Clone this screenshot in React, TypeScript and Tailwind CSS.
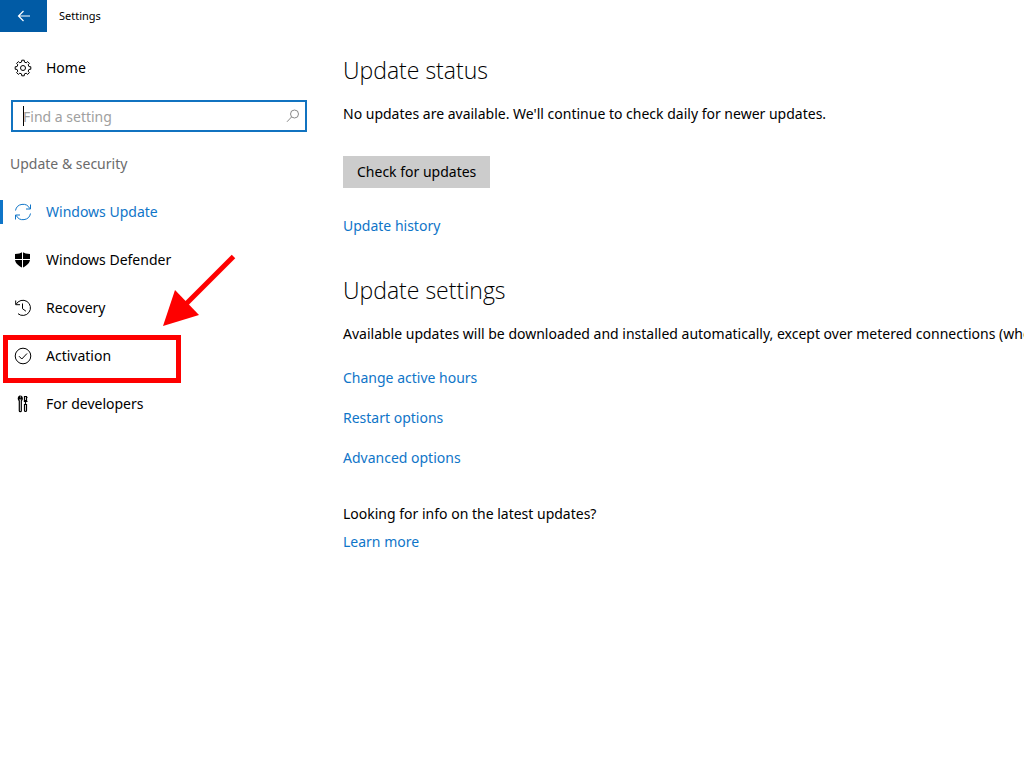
import type { ReactNode } from "react";

type IconProps = { children: ReactNode };

function Icon({ children }: IconProps) {
    return (
        <svg
            viewBox="0 0 18 18"
            className="size-[18px] shrink-0"
            fill="none"
            stroke="currentColor"
            strokeWidth="1"
            aria-hidden="true"
        >
            {children}
        </svg>
    );
}

function gearPath(teeth: number) {
    const points: string[] = [];
    const step = (Math.PI * 2) / teeth;

    for (let i = 0; i < teeth; i++) {
        const corners = [
            [-0.3, 6.1],
            [-0.2, 7.9],
            [0.2, 7.9],
            [0.3, 6.1],
        ];

        for (const [offset, radius] of corners) {
            const angle = (i + offset) * step;
            points.push(`${9 + radius * Math.sin(angle)} ${9 - radius * Math.cos(angle)}`);
        }
    }

    return `M${points.join("L")}Z`;
}

function GearIcon() {
    return (
        <Icon>
            <path strokeLinejoin="round" d={gearPath(8)} />
            <circle cx="9" cy="9" r="2.5" />
        </Icon>
    );
}

function SyncIcon() {
    return (
        <Icon>
            <path d="M1.5 7.5A7.6 7.6 0 0 1 15.8 5.6M16.5 1.5v4.5h-4.5" />
            <path d="M16.5 10.5A7.6 7.6 0 0 1 2.2 12.4M1.5 16.5V12h4.5" />
        </Icon>
    );
}

function ShieldIcon() {
    return (
        <Icon>
            <path
                fill="currentColor"
                stroke="none"
                d="M8.5 1C6.7 2.3 4.2 3 1 3v5c0 4 3 6.7 7.5 8.7C13 14.7 16 12 16 8V3C12.8 3 10.3 2.3 8.5 1z"
            />
            <path stroke="white" d="M8.5 1v16M1 8.5h16" />
        </Icon>
    );
}

function HistoryIcon() {
    return (
        <Icon>
            <path d="M2.2 5.2A7.6 7.6 0 1 1 4 14.7M1.7 1.5v4.2H6" />
            <path d="M8.5 4.5v5.2l3.4 2.5" />
        </Icon>
    );
}

function CheckIcon() {
    return (
        <Icon>
            <circle cx="9" cy="9" r="7.8" />
            <path d="m5 9.2 2.8 2.8L13 6.5" />
        </Icon>
    );
}

function ToolsIcon() {
    return (
        <Icon>
            <path
                strokeWidth="1.2"
                d="M5.5 1.3C4.6 1.8 4.3 2.6 4.3 3.5c0 1 .4 1.700 1 2.200v10c0 1.300 2 1.300 2 0v-10c.6-.5 1-1.200 1-2.200 0-.9-.3-1.700-1.200-2.200v2.500H5.500z"
            />
            <path
                strokeWidth="1.2"
                d="M10.500 1.500h2v4h-2zM9.800 6.500h3.700M11.500 6.500v3M10.500 9.500h2v6c0 1.300-2 1.300-2 0zM12.500 2.500h1"
            />
        </Icon>
    );
}

const navItems = [
    { label: "Windows Update", icon: <SyncIcon />, active: true },
    { label: "Windows Defender", icon: <ShieldIcon /> },
    { label: "Recovery", icon: <HistoryIcon /> },
    { label: "Activation", icon: <CheckIcon />, highlighted: true },
    { label: "For developers", icon: <ToolsIcon /> },
];

const settingsLinks = ["Change active hours", "Restart options", "Advanced options"];

// Red frame and arrow that point the reader at a menu entry
function Callout() {
    return (
        <>
            <span className="pointer-events-none absolute top-[3px] left-[3px] h-12 w-[178px] border-5 border-[#fe0000]" />
            <svg
                viewBox="0 0 74 74"
                className="pointer-events-none absolute -top-[78px] left-[162px] size-[74px]"
                aria-hidden="true"
            >
                <path d="M71.5 2.5 24 50" stroke="#fe0000" strokeWidth="5" />
                <path d="M1 72 13 36 37 61z" fill="#fe0000" />
            </svg>
        </>
    );
}

function Sidebar() {
    return (
        <aside className="w-[307px] shrink-0 pt-3">
            <a href="#home" className="flex h-12 items-center gap-[14px] pl-[14px]">
                <GearIcon />
                Home
            </a>

            <div className="relative mt-2 ml-[11px]">
                <input
                    type="text"
                    aria-label="Find a setting"
                    placeholder="Find a setting"
                    className="block h-8 w-full border-2 border-[#1173c0] bg-white pr-8 pl-[10px] outline-none placeholder:text-[#a0a0a0]"
                />
                <span className="absolute top-[6px] left-3 h-5 w-px bg-black" />
                <svg
                    viewBox="0 0 14 14"
                    className="absolute top-[9px] right-[7px] size-[14px] text-[#8a8a8a]"
                    fill="none"
                    stroke="currentColor"
                    aria-hidden="true"
                >
                    <circle cx="8.5" cy="5" r="4" />
                    <path d="M5.5 8 1 12.8" />
                </svg>
            </div>

            <h2 className="mt-2 flex h-12 items-center pl-[10px] text-[#6b6b6b]">
                Update &amp; security
            </h2>

            <nav>
                <ul>
                    {navItems.map((item) => (
                        <li key={item.label} className="relative">
                            <a
                                href="#section"
                                className={`flex h-12 items-center gap-[14px] pl-[14px] ${item.active ? "text-[#0f75c8]" : ""}`}
                            >
                                {item.icon}
                                {item.label}
                            </a>
                            {item.active && (
                                <span className="absolute top-3 left-0 h-6 w-[3px] bg-[#0f75c8]" />
                            )}
                            {item.highlighted && <Callout />}
                        </li>
                    ))}
                </ul>
            </nav>
        </aside>
    );
}

export default function App() {
    return (
        <div className="overflow-hidden bg-white font-['Noto_Sans',sans-serif] text-[14px] leading-5 text-black">
            <header className="flex h-8 items-center gap-3">
                <button
                    type="button"
                    aria-label="Back"
                    className="flex h-8 w-[47px] items-center justify-center bg-[#015ba5] text-white"
                >
                    <svg viewBox="0 0 14 12" className="h-3 w-[14px]" fill="none" stroke="currentColor" strokeWidth="1.2">
                        <path d="M13 6H1.5M6.5 1l-5 5 5 5" />
                    </svg>
                </button>
                <h1 className="text-[11px]">Settings</h1>
            </header>

            <div className="flex">
                <Sidebar />

                <main className="min-w-0 flex-1 pt-5 pl-9">
                    <section>
                        <h2 className="font-['Open_Sans',sans-serif] text-[23px] leading-9 font-light">Update status</h2>
                        <p className="mt-4">
                            No updates are available. We'll continue to check daily for newer updates.
                        </p>
                        <button type="button" className="mt-8 block h-8 bg-[#cccccc] px-[14px]">
                            Check for updates
                        </button>
                        <a href="#history" className="mt-7 block text-[#0f75c8]">
                            Update history
                        </a>
                    </section>

                    <section className="mt-9">
                        <h2 className="font-['Open_Sans',sans-serif] text-[23px] leading-9 font-light">Update settings</h2>
                        <p className="mt-4 whitespace-nowrap">
                            Available updates will be downloaded and installed automatically, except over metered connections (where charges may apply).
                        </p>
                        <ul className="mt-6 flex flex-col gap-5 text-[#0f75c8]">
                            {settingsLinks.map((label) => (
                                <li key={label}>
                                    <a href="#option">{label}</a>
                                </li>
                            ))}
                        </ul>
                    </section>

                    <section className="mt-9">
                        <p>Looking for info on the latest updates?</p>
                        <a href="#learn" className="mt-2 block text-[#0f75c8]">
                            Learn more
                        </a>
                    </section>
                </main>
            </div>
        </div>
    );
}
